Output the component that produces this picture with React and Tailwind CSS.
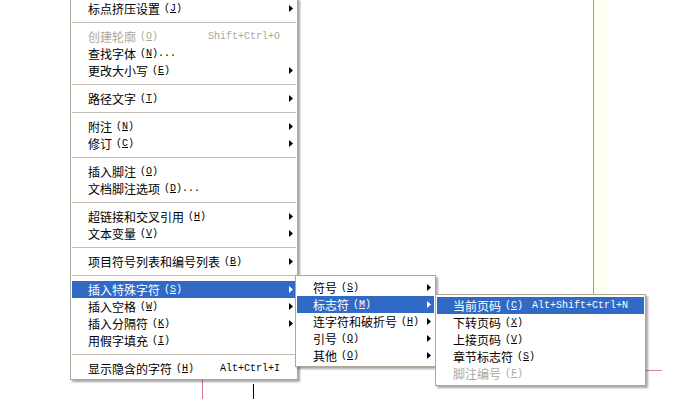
const cjk = "font-['Noto_Sans_CJK_SC','Noto_Sans',sans-serif]"
const mono = "font-['Liberation_Mono','Noto_Sans_CJK_SC',monospace]"

const mainItems = [
  { label: '标点挤压设置', key: 'J', sub: true },
  'sep',
  { label: '创建轮廓', key: 'O', short: 'Shift+Ctrl+O', disabled: true },
  { label: '查找字体', key: 'N', dots: true },
  { label: '更改大小写', key: 'E', sub: true },
  'sep',
  { label: '路径文字', key: 'T', sub: true },
  'sep',
  { label: '附注', key: 'N', sub: true },
  { label: '修订', key: 'C', sub: true },
  'sep',
  { label: '插入脚注', key: 'O' },
  { label: '文档脚注选项', key: 'D', dots: true },
  'sep',
  { label: '超链接和交叉引用', key: 'H', sub: true },
  { label: '文本变量', key: 'V', sub: true },
  'sep',
  { label: '项目符号列表和编号列表', key: 'B', sub: true },
  'sep',
  { label: '插入特殊字符', key: 'S', sub: true, active: true },
  { label: '插入空格', key: 'W', sub: true },
  { label: '插入分隔符', key: 'K', sub: true },
  { label: '用假字填充', key: 'I' },
  'sep',
  { label: '显示隐含的字符', key: 'H', short: 'Alt+Ctrl+I' },
]

const specialItems = [
  { label: '符号', key: 'S', sub: true },
  { label: '标志符', key: 'M', sub: true, active: true },
  { label: '连字符和破折号', key: 'H', sub: true },
  { label: '引号', key: 'Q', sub: true },
  { label: '其他', key: 'O', sub: true },
]

const markerItems = [
  { label: '当前页码', key: 'C', short: 'Alt+Shift+Ctrl+N', active: true },
  { label: '下转页码', key: 'X' },
  { label: '上接页码', key: 'V' },
  { label: '章节标志符', key: 'S' },
  { label: '脚注编号', key: 'F', disabled: true },
]

function Arrow({ white }) {
  return (
    <svg width="4" height="7" viewBox="0 0 4 7">
      <path d="M0 0 L4 3.5 L0 7 Z" fill={white ? '#ffffff' : '#000000'} />
    </svg>
  )
}

function Row({ item }) {
  const color = item.active
    ? 'bg-[#316ac5] text-white'
    : item.disabled
      ? 'text-[#aca899]'
      : 'text-black'
  return (
    <div className={`flex items-center h-[17px] pl-[16px] ${color}`}>
      <span className="flex-1 flex items-center whitespace-nowrap leading-none">
        <span className={`text-[12px] ${cjk}`}>{item.label}</span>
        <span className={`ml-[4px] text-[10px] ${mono}`}>
          (<span className="underline">{item.key}</span>){item.dots && '...'}
        </span>
      </span>
      {item.short && (
        <span className={`whitespace-nowrap text-[10px] leading-none ${mono}`}>{item.short}</span>
      )}
      <span className="w-[16px] flex justify-end pr-[3px]">
        {item.sub && <Arrow white={item.active} />}
      </span>
    </div>
  )
}

function Menu({ items, className }) {
  return (
    <div className={`absolute bg-white border border-[#aca899] p-[1px] shadow-[2px_2px_2px_rgba(0,0,0,0.35)] ${className}`}>
      {items.map((item, i) =>
        item === 'sep' ? (
          <div key={i} className="h-[11px] flex items-center">
            <div className="h-px w-full bg-[#c2bfb2]" />
          </div>
        ) : (
          <Row key={i} item={item} />
        )
      )}
    </div>
  )
}

export default function App() {
  return (
    <div className="relative w-[673px] h-[399px] bg-white overflow-hidden">
      {/* page guides behind the menus */}
      <div className="absolute left-[594px] top-0 w-[13px] h-[294px] bg-[#fffff2]" />
      <div className="absolute left-[593px] top-0 w-px h-[294px] bg-[#9d99c9]" />
      <div className="absolute left-[645px] top-[370px] w-[17px] h-px bg-[#c58a9c]" />
      <div className="absolute left-[202px] top-[379px] w-px h-[20px] bg-[#d6759a]" />
      <div className="absolute left-[253px] top-[384px] w-px h-[15px] bg-black" />

      <Menu items={mainItems} className="left-[70px] top-[-2px] w-[228px] pt-[1px] pb-[2px]" />
      <Menu items={specialItems} className="left-[295px] top-[275px] w-[141px] pt-[3px] pb-[2px]" />
      <Menu items={markerItems} className="left-[435px] top-[294px] w-[211px] pt-[2px] pb-[3px]" />
    </div>
  )
}
